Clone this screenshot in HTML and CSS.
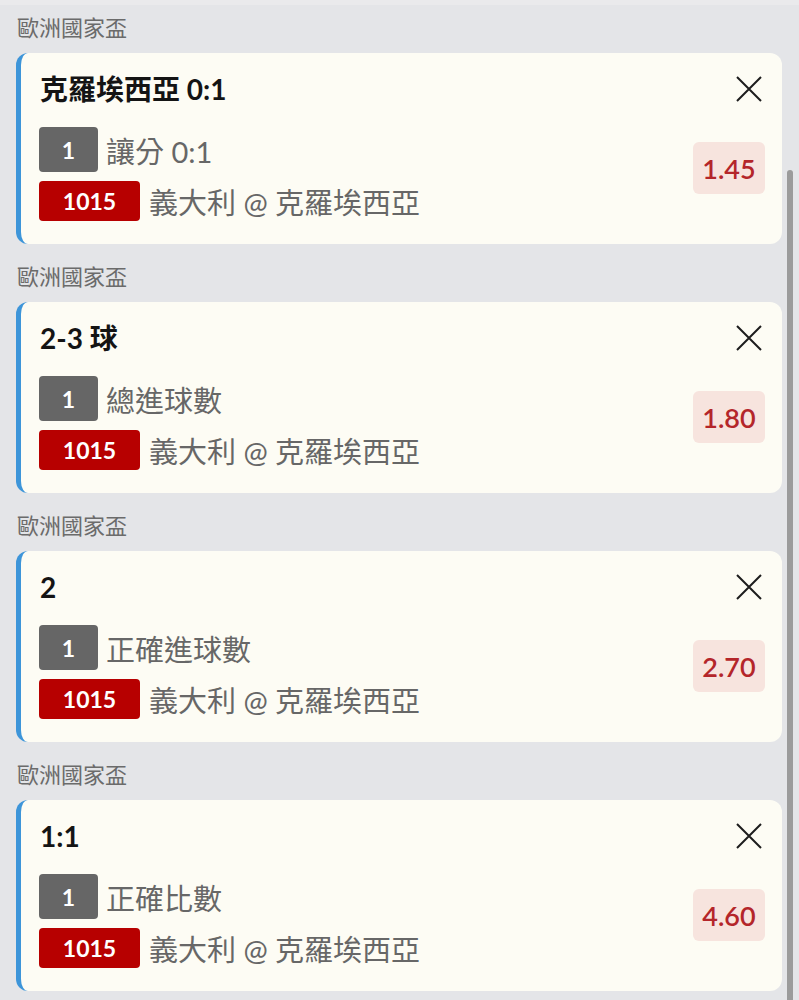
FILE: index.html
```html
<!DOCTYPE html>
<html>
<head>
    <meta charset="utf-8">
    <title>投注單</title>
    <link rel="stylesheet" href="styles.css">
</head>
<body>
    <div class="top-strip"></div>
    <div class="bet-list">
        <div class="league">歐洲國家盃</div>
        <div class="bet-card">
            <div class="bet-main">
                <div class="bet-title">克羅埃西亞 0:1</div>
                <div class="bet-row">
                    <span class="tag tag-grey">1</span>
                    <span class="bet-text">讓分 0:1</span>
                </div>
                <div class="bet-row">
                    <span class="tag tag-red">1015</span>
                    <span class="bet-text">義大利 @ 克羅埃西亞</span>
                </div>
            </div>
            <div class="bet-side">
                <button class="close-btn" aria-label="移除">
                    <svg width="26" height="26" viewBox="0 0 26 26"><path d="M1 1L25 25M25 1L1 25" stroke="#1d1d1d" stroke-width="2" fill="none"/></svg>
                </button>
                <div class="odds">1.45</div>
            </div>
        </div>

        <div class="league">歐洲國家盃</div>
        <div class="bet-card">
            <div class="bet-main">
                <div class="bet-title">2-3 球</div>
                <div class="bet-row">
                    <span class="tag tag-grey">1</span>
                    <span class="bet-text">總進球數</span>
                </div>
                <div class="bet-row">
                    <span class="tag tag-red">1015</span>
                    <span class="bet-text">義大利 @ 克羅埃西亞</span>
                </div>
            </div>
            <div class="bet-side">
                <button class="close-btn" aria-label="移除">
                    <svg width="26" height="26" viewBox="0 0 26 26"><path d="M1 1L25 25M25 1L1 25" stroke="#1d1d1d" stroke-width="2" fill="none"/></svg>
                </button>
                <div class="odds">1.80</div>
            </div>
        </div>

        <div class="league">歐洲國家盃</div>
        <div class="bet-card">
            <div class="bet-main">
                <div class="bet-title">2</div>
                <div class="bet-row">
                    <span class="tag tag-grey">1</span>
                    <span class="bet-text">正確進球數</span>
                </div>
                <div class="bet-row">
                    <span class="tag tag-red">1015</span>
                    <span class="bet-text">義大利 @ 克羅埃西亞</span>
                </div>
            </div>
            <div class="bet-side">
                <button class="close-btn" aria-label="移除">
                    <svg width="26" height="26" viewBox="0 0 26 26"><path d="M1 1L25 25M25 1L1 25" stroke="#1d1d1d" stroke-width="2" fill="none"/></svg>
                </button>
                <div class="odds">2.70</div>
            </div>
        </div>

        <div class="league">歐洲國家盃</div>
        <div class="bet-card">
            <div class="bet-main">
                <div class="bet-title">1:1</div>
                <div class="bet-row">
                    <span class="tag tag-grey">1</span>
                    <span class="bet-text">正確比數</span>
                </div>
                <div class="bet-row">
                    <span class="tag tag-red">1015</span>
                    <span class="bet-text">義大利 @ 克羅埃西亞</span>
                </div>
            </div>
            <div class="bet-side">
                <button class="close-btn" aria-label="移除">
                    <svg width="26" height="26" viewBox="0 0 26 26"><path d="M1 1L25 25M25 1L1 25" stroke="#1d1d1d" stroke-width="2" fill="none"/></svg>
                </button>
                <div class="odds">4.60</div>
            </div>
        </div>
    </div>
    <div class="scroll-thumb"></div>
</body>
</html>
```

FILE: styles.css
```css
html, body {
    margin: 0;
    padding: 0;
}
body {
    font-family: Lato, "Noto Sans CJK TC", sans-serif;
    background-color: #e4e5e8;
    height: 1000px;
    overflow: hidden;
    position: relative;
}
.top-strip {
    height: 5px;
    background-color: #eaeaec;
}
.bet-list {
    margin-right: 17px;
    margin-left: 16px;
}
.league {
    font-size: 22px;
    line-height: 28px;
    color: #6b6b6b;
    padding: 9px 0 11px 1px;
}
.bet-card {
    display: flex;
    justify-content: space-between;
    background-color: #fdfcf4;
    border-left: 5px solid #3d95d9;
    border-radius: 12px;
    padding: 18px 17px 24px 18px;
    margin-bottom: 10px;
    height: 191px;
    box-sizing: border-box;
}
.bet-title {
    font-size: 28px;
    font-weight: 700;
    line-height: 36px;
    color: #141414;
    margin-bottom: 20px;
    padding-left: 1px;
}
.bet-row {
    display: flex;
    align-items: center;
    margin-bottom: 8px;
}
.tag {
    display: flex;
    align-items: center;
    justify-content: center;
    color: #fff;
    font-weight: 700;
    font-size: 23px;
    border-radius: 4px;
    margin-right: 8px;
}
.tag-grey {
    width: 59px;
    height: 45px;
    background-color: #666666;
}
.tag-red {
    width: 101px;
    height: 40px;
    background-color: #b70000;
    margin-right: 9px;
}
.bet-text {
    font-size: 29px;
    color: #676767;
}
.bet-side {
    display: flex;
    flex-direction: column;
    align-items: flex-end;
}
.close-btn {
    width: 36px;
    height: 36px;
    padding: 0;
    border: none;
    background: none;
    display: flex;
    align-items: center;
    justify-content: center;
    margin-right: -2px;
}
.odds {
    width: 72px;
    height: 52px;
    margin-top: 35px;
    background-color: #f7e4de;
    border-radius: 6px;
    color: #b4262a;
    font-size: 27px;
    font-weight: 600;
    display: flex;
    align-items: center;
    justify-content: center;
}
.scroll-thumb {
    position: absolute;
    left: 787px;
    top: 170px;
    width: 6px;
    height: 830px;
    background-color: #9b9b9b;
    border-radius: 3px 3px 0 0;
}
```
